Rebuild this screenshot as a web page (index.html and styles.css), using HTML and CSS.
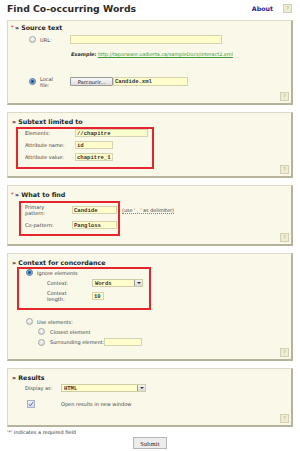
FILE: index.html
```html
<!DOCTYPE html>
<html>
<head>
<meta charset="utf-8">
<link rel="stylesheet" href="styles.css">
</head>
<body>
<div class="page">
  <div class="top">
    <h1 class="title">Find Co-occurring Words</h1>
    <a class="about" href="#">About</a>
    <span class="help">?</span>
  </div>

  <form class="form">
    <section class="sec">
      <div class="sec-h first"><span class="star">*</span>» Source text</div>
      <div class="row r-url">
        <input type="radio" class="radio" name="src">
        <label class="lbl w30">URL:</label>
        <input type="text" class="txt w152">
      </div>
      <div class="example"><b><i>Example:</i></b> <a href="#">http://taporware.ualberta.ca/sampleDocs/interact2.xml</a></div>
      <div class="row r-local">
        <input type="radio" class="radio" name="src" checked>
        <label class="lbl w30">Local<br>file:</label>
        <button type="button" class="browse">Parcourir...</button>
        <input type="text" class="txt w75" value="Candide.xml">
      </div>
      <span class="help h-s1">?</span>
    </section>

    <section class="sec">
      <div class="sec-h"><span class="nostar"></span>» Subtext limited to</div>
      <div class="hl hl-2">
        <div class="row r2"><label class="lbl w50">Elements:</label><input type="text" class="txt w73" value="//chapitre"></div>
        <div class="row r2"><label class="lbl w50">Attribute name:</label><input type="text" class="txt w38" value="id"></div>
        <div class="row r2"><label class="lbl w50">Attribute value:</label><input type="text" class="txt w38" value="chapitre_1"></div>
      </div>
      <span class="help h-s2">?</span>
    </section>

    <section class="sec">
      <div class="sec-h"><span class="star">*</span>» What to find</div>
      <div class="find">
        <div class="hl hl-3">
          <div class="row r3"><label class="lbl w47">Primary<br>pattern:</label><input type="text" class="txt w45" value="Candide"></div>
          <div class="row r3"><label class="lbl w47">Co-pattern:</label><input type="text" class="txt w45" value="Pangloss"></div>
        </div>
        <span class="hint">(use ' , ' as delimiter)</span>
      </div>
      <span class="help h-s3">?</span>
    </section>

    <section class="sec">
      <div class="sec-h"><span class="nostar"></span>» Context for concordance</div>
      <div class="hl hl-4">
        <div class="row r-ign"><input type="radio" class="radio" name="ctx" checked><label class="lbl ml4">Ignore elements</label></div>
        <div class="row r-ctx"><label class="lbl w45">Context:</label>
          <div class="sel w51"><select><option>Words</option></select><span class="arrow"></span></div>
        </div>
        <div class="row r-len"><label class="lbl w45">Context<br>length:</label><input type="text" class="txt w12" value="10"></div>
      </div>
      <div class="row r-use"><input type="radio" class="radio" name="ctx"><label class="lbl ml4">Use elements:</label></div>
      <div class="row r-sub"><input type="radio" class="radio" name="el"><label class="lbl ml5">Closest element</label></div>
      <div class="row r-sub r-sur"><input type="radio" class="radio" name="el"><label class="lbl ml5">Surrounding element:</label><input type="text" class="txt w38 ml3"></div>
      <span class="help h-s4">?</span>
    </section>

    <section class="sec">
      <div class="sec-h"><span class="nostar"></span>» Results</div>
      <div class="row r-disp"><label class="lbl w36">Display as:</label>
        <div class="sel w85"><select><option>HTML</option></select><span class="arrow"></span></div>
      </div>
      <div class="row r-chk">
        <span class="check"><svg width="6" height="6" viewBox="0 0 6 6"><path d="M1 3.2 L2.4 4.8 L5.2 0.8" fill="none" stroke="#3b64b8" stroke-width="0.9"/></svg></span>
        <label class="lbl ml26">Open results in new window</label>
      </div>
      <span class="help h-s5">?</span>
    </section>

    <p class="note">'<span class="red">*</span>' indicates a required field</p>
    <div class="submit-row"><button type="submit" class="submit">Submit</button></div>
  </form>
</div>
</body>
</html>
```
FILE: styles.css
```css
* { box-sizing: border-box; }
html, body { margin: 0; padding: 0; background: #fff; }
body {
  font-family: "DejaVu Sans", Verdana, sans-serif;
  font-size: 5px;
  color: #3a3a3a;
}
.page { width: 300px; padding: 0 7px; }

.top { display: flex; align-items: center; height: 17px; margin-bottom: 3px; }
.title { flex: 1; margin: 0; font-size: 9.3px; font-weight: bold; color: #2b2b2b; }
.about { font-size: 6.3px; font-weight: bold; color: #1f1f8a; text-decoration: none; margin-right: 10px; }
.help {
  display: flex; align-items: center; justify-content: center;
  width: 9px; height: 9px;
  border: 1px solid #d2d0b0; background: #eeedd2;
  color: #a8a690; font-size: 5px; line-height: 1;
  margin-right: 1px;
}

.form { display: flex; flex-direction: column; }
.sec {
  display: flex; flex-direction: column; align-items: flex-start;
  background: #f9f8e9;
  border: 1px solid #dedcc8;
  border-right: 2px solid #b5b39b;
  border-bottom: 2px solid #b5b39b;
  margin-bottom: 7px;
  padding: 0 2px 2px 0;
}
.sec .help { align-self: flex-end; margin-right: 0; }
.sec-h {
  display: flex; align-items: center;
  height: 8px; margin-top: 4px; padding-left: 3px;
  font-size: 6.3px; font-weight: bold; color: #1e1e1e; white-space: pre;
}
.sec-h.first { margin-top: 2px; }
.star { display: inline-block; width: 4px; color: #e02020; font-size: 5px; }
.nostar { display: inline-block; width: 1px; }

.row { display: flex; align-items: center; }
.lbl { display: block; line-height: 6px; color: #444; white-space: nowrap; }
.w30 { width: 30px; } .w36 { width: 36px; } .w45 { width: 45px; } .w47 { width: 47px; } .w50 { width: 50px; }
.ml3 { margin-left: 3px; } .ml4 { margin-left: 4px; } .ml5 { margin-left: 5px; } .ml26 { margin-left: 26px; }
.r-url .lbl, .r-local .lbl { margin-left: 4px; }

.radio {
  appearance: none; -webkit-appearance: none;
  width: 7px; height: 7px; margin: 0; flex: none;
  border: 1px solid #a8a8a8; border-radius: 50%;
  background: radial-gradient(circle at 50% 35%, #ffffff 0, #e2e2e2 60%, #c6c6c6 100%);
}
.radio:checked {
  border-color: #56789c;
  background: radial-gradient(circle, #1a3f78 0, #2b63a8 1.2px, #8fb4dd 2.2px, #c6d8ee 100%);
}

.txt {
  height: 9px; margin: 0; padding: 0 0 0 1px;
  border: 1px solid #d6d3b0; background: #fffdcb;
  font-family: "Liberation Mono", "Courier New", monospace; font-weight: bold;
  font-size: 5.6px; color: #333;
}
input.w12 { width: 12px; } input.w38 { width: 38px; } input.w45 { width: 45px; }
input.w73 { width: 73px; } input.w75 { width: 75px; } input.w152 { width: 152px; }

.r-url { margin-top: 4px; padding-left: 21px; height: 9px; }
.example { margin-top: 7px; margin-left: 63px; height: 6px; line-height: 6px; font-size: 4.9px; color: #333; white-space: nowrap; }
.example a { color: #3f9a36; }
.r-local { margin-top: 18px; padding-left: 21px; height: 13px; }
.browse {
  width: 43px; height: 9px; margin: 0; padding: 0;
  border: 1px solid #9a9a9a; border-radius: 1px;
  background: linear-gradient(#fbfbfb, #dcdcdc);
  font-family: "DejaVu Sans", Verdana, sans-serif; font-size: 5.2px; color: #222;
}
.h-s1 { margin-top: 4px; }

.hl { border: 2px solid #e4262c; display: flex; flex-direction: column; }
.hl-2 { margin: 2px 0 0 8px; width: 138px; padding: 0 0 6px 7px; gap: 4px; }
.r2 { height: 8px; }
.r2 .txt { height: 8px; }
.h-s2 { margin-top: -4px; }

.find { display: flex; align-items: flex-start; margin: 3px 0 0 11px; }
.hl-3 { width: 101px; padding: 0 0 2px 4px; gap: 1px; }
.r3 { height: 14px; }
.r3 .txt { height: 8px; }
.hint {
  margin: 6px 0 0 2px; height: 7px; line-height: 6px; font-size: 4.9px; color: #444;
  border-bottom: 1px dotted #5aa04a; white-space: nowrap;
}
.h-s3 { margin-top: -3px; }

.hl-4 { margin: 1px 0 0 9px; width: 134px; padding: 0 0 6px 0; }
.r-ign { height: 7px; padding-left: 7px; }
.r-ctx { height: 8px; margin-top: 3px; padding-left: 28px; }
.r-len { height: 12px; margin-top: 3px; padding-left: 28px; }
.r-len .txt { height: 8px; }
.sel {
  display: flex; height: 8px;
  border: 1px solid #cfcca8; background: #fffdcb;
}
.sel select {
  appearance: none; -webkit-appearance: none;
  flex: 1; min-width: 0; height: 100%; margin: 0; padding: 0 0 0 2px;
  border: 0; background: transparent; outline: none;
  font-family: "Liberation Mono", "Courier New", monospace; font-weight: bold; font-size: 5.5px; color: #333;
}
.arrow {
  width: 8px; height: 100%; flex: none;
  border-left: 1px solid #9c9c9c;
  background: linear-gradient(#f6f6f6, #d8d8d8);
  display: flex; align-items: center; justify-content: center;
}
.arrow::after {
  content: ""; width: 0; height: 0;
  border-left: 2px solid transparent; border-right: 2px solid transparent; border-top: 2px solid #333;
}
.w51 { width: 51px; } .w85 { width: 85px; }
.r-use { height: 7px; margin-top: 8px; padding-left: 18px; }
.r-sub { height: 7px; margin-top: 3px; padding-left: 30px; }
.r-sur { height: 8px; }
.r-sur .txt { height: 8px; }
.h-s4 { margin-top: 2px; }

.r-disp { height: 8px; margin-top: 3px; padding-left: 17px; }
.r-chk { height: 8px; margin-top: 8px; padding-left: 19px; }
.check {
  width: 8px; height: 8px; flex: none;
  border: 1px solid #a9b3c4; background: linear-gradient(#f2f5fa, #d3dbe8);
  display: flex; align-items: center; justify-content: center;
}
.h-s5 { margin-top: 6px; }

.note { margin: -5px 0 0 0; height: 6px; line-height: 6px; font-size: 5px; color: #333; }
.red { color: #e02020; }
.submit-row { display: flex; justify-content: center; margin-top: 2px; }
.submit {
  width: 34px; height: 12px; margin: 0; padding: 0;
  border: 1px solid #b5b5b5; background: #ececec;
  font-family: "Liberation Serif", "Times New Roman", serif; font-size: 6.3px; color: #222; letter-spacing: 0.2px;
}
```
